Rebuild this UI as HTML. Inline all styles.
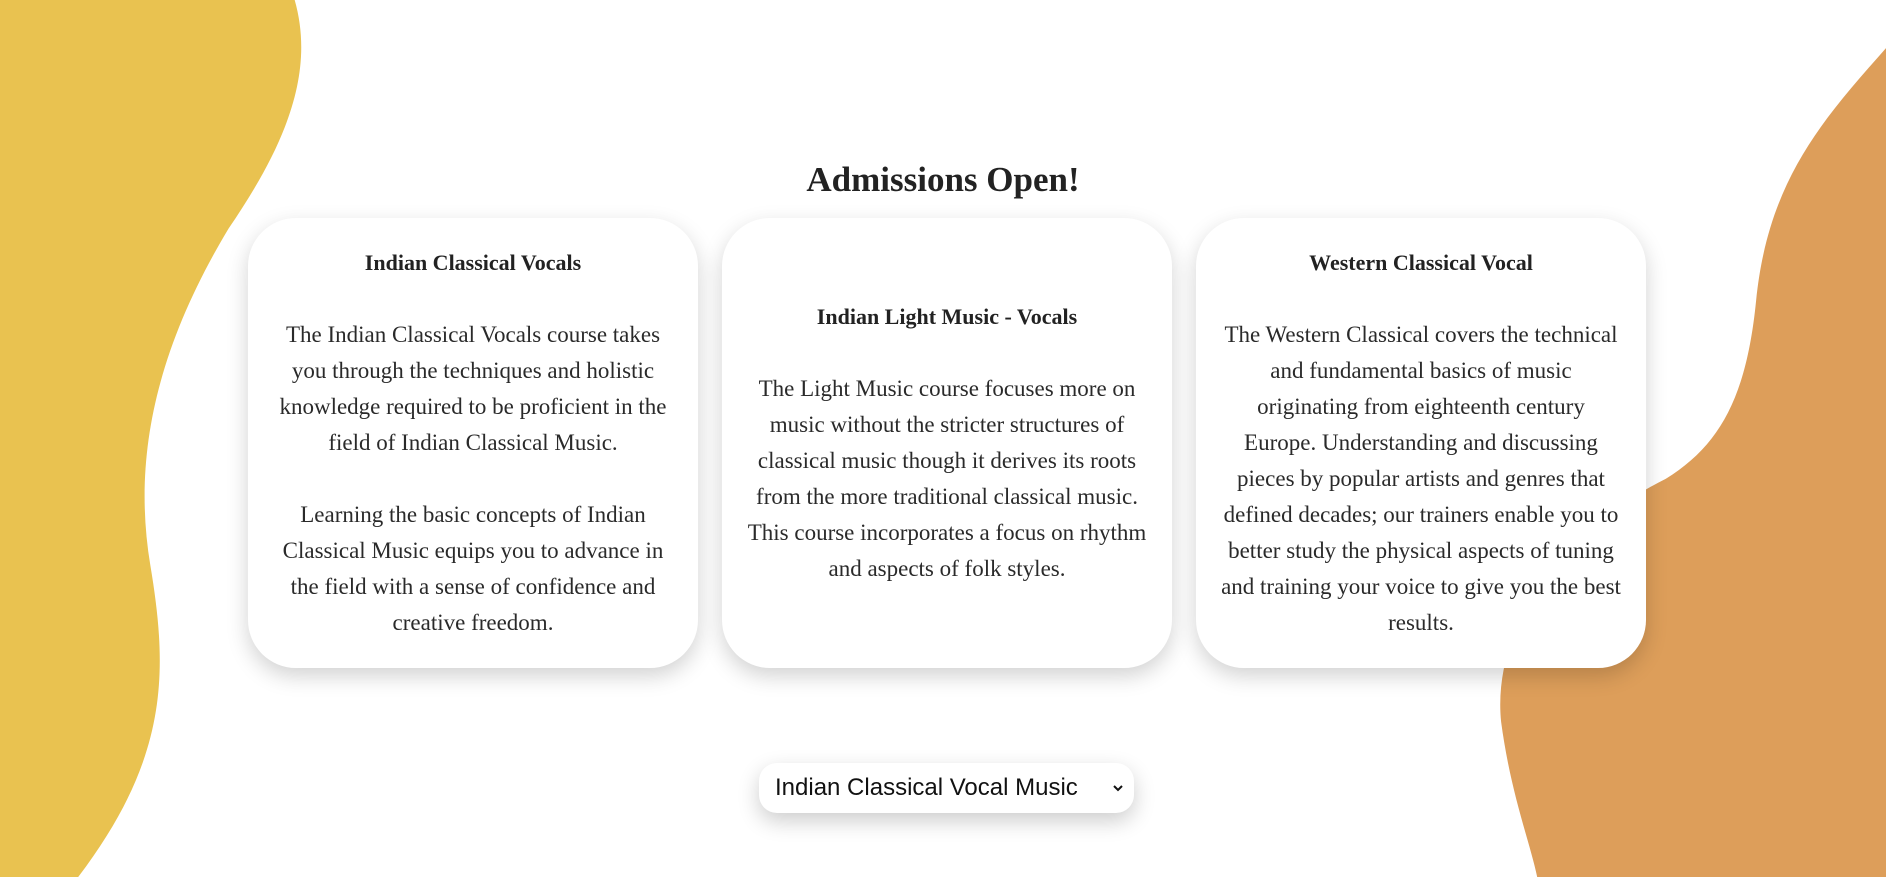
<!DOCTYPE html>
<html><head><style>
html,body{margin:0;padding:0;width:1886px;height:877px;overflow:hidden;background:#fff;position:relative;font-family:"Liberation Serif",serif;color:#2a2a2a}
svg.bg{position:absolute;left:0;top:0}
h1{position:absolute;left:0;width:1886px;top:155px;margin:0;text-align:center;font-size:35px;font-weight:bold;line-height:50px;color:#222}
.card{position:absolute;top:218px;width:450px;height:450px;background:#fff;border-radius:48px;box-shadow:0 8px 22px rgba(0,0,0,0.18);box-sizing:border-box;padding:30px 10px;text-align:center;font-size:23px;line-height:36px;display:flex;flex-direction:column;justify-content:center}
.card h3{margin:0 0 36px;font-size:22px;line-height:36px;color:#222}
.card p{margin:0;white-space:nowrap}
.sel{position:absolute;left:759px;top:763px;width:375px;height:50px;background:#fff;border-radius:18px;box-shadow:0 8px 22px rgba(0,0,0,0.2);font-family:"Liberation Sans",Arial,sans-serif;font-size:24px;line-height:50px;color:#111;box-sizing:border-box;padding-left:16px}
.sel svg{position:absolute;right:10px;top:20px}
</style></head><body>
<svg class="bg" width="1886" height="877" viewBox="0 0 1568 729" preserveAspectRatio="none">
<path d="M0 0 L245 0 C262 60 238 120 190 190 C130 290 110 380 125 470 C140 560 140 630 65 729 L0 729 Z" fill="#e9c250"/>
<path d="M1568 40 C1515 100 1470 150 1460 250 C1452 330 1430 370 1385 398 C1300 440 1240 520 1248 600 C1256 660 1272 700 1278 729 L1568 729 Z" fill="#dd9e5a"/>
</svg>
<h1>Admissions Open!</h1>
<div class="card" style="left:248px"><h3>Indian Classical Vocals</h3><p>The Indian Classical Vocals course takes<br>you through the techniques and holistic<br>knowledge required to be proficient in the<br>field of Indian Classical Music.</p><p><br>Learning the basic concepts of Indian<br>Classical Music equips you to advance in<br>the field with a sense of confidence and<br>creative freedom.</p></div>
<div class="card" style="left:722px"><h3>Indian Light Music - Vocals</h3><p>The Light Music course focuses more on<br>music without the stricter structures of<br>classical music though it derives its roots<br>from the more traditional classical music.<br>This course incorporates a focus on rhythm<br>and aspects of folk styles.</p></div>
<div class="card" style="left:1196px"><h3>Western Classical Vocal</h3><p>The Western Classical covers the technical<br>and fundamental basics of music<br>originating from eighteenth century<br>Europe. Understanding and discussing<br>pieces by popular artists and genres that<br>defined decades; our trainers enable you to<br>better study the physical aspects of tuning<br>and training your voice to give you the best<br>results.</p></div>
<div class="sel">Indian Classical Vocal Music<svg width="12" height="10" viewBox="0 0 12 10"><path d="M2 3 L6 7 L10 3" fill="none" stroke="#111" stroke-width="2"/></svg></div>
</body></html>
